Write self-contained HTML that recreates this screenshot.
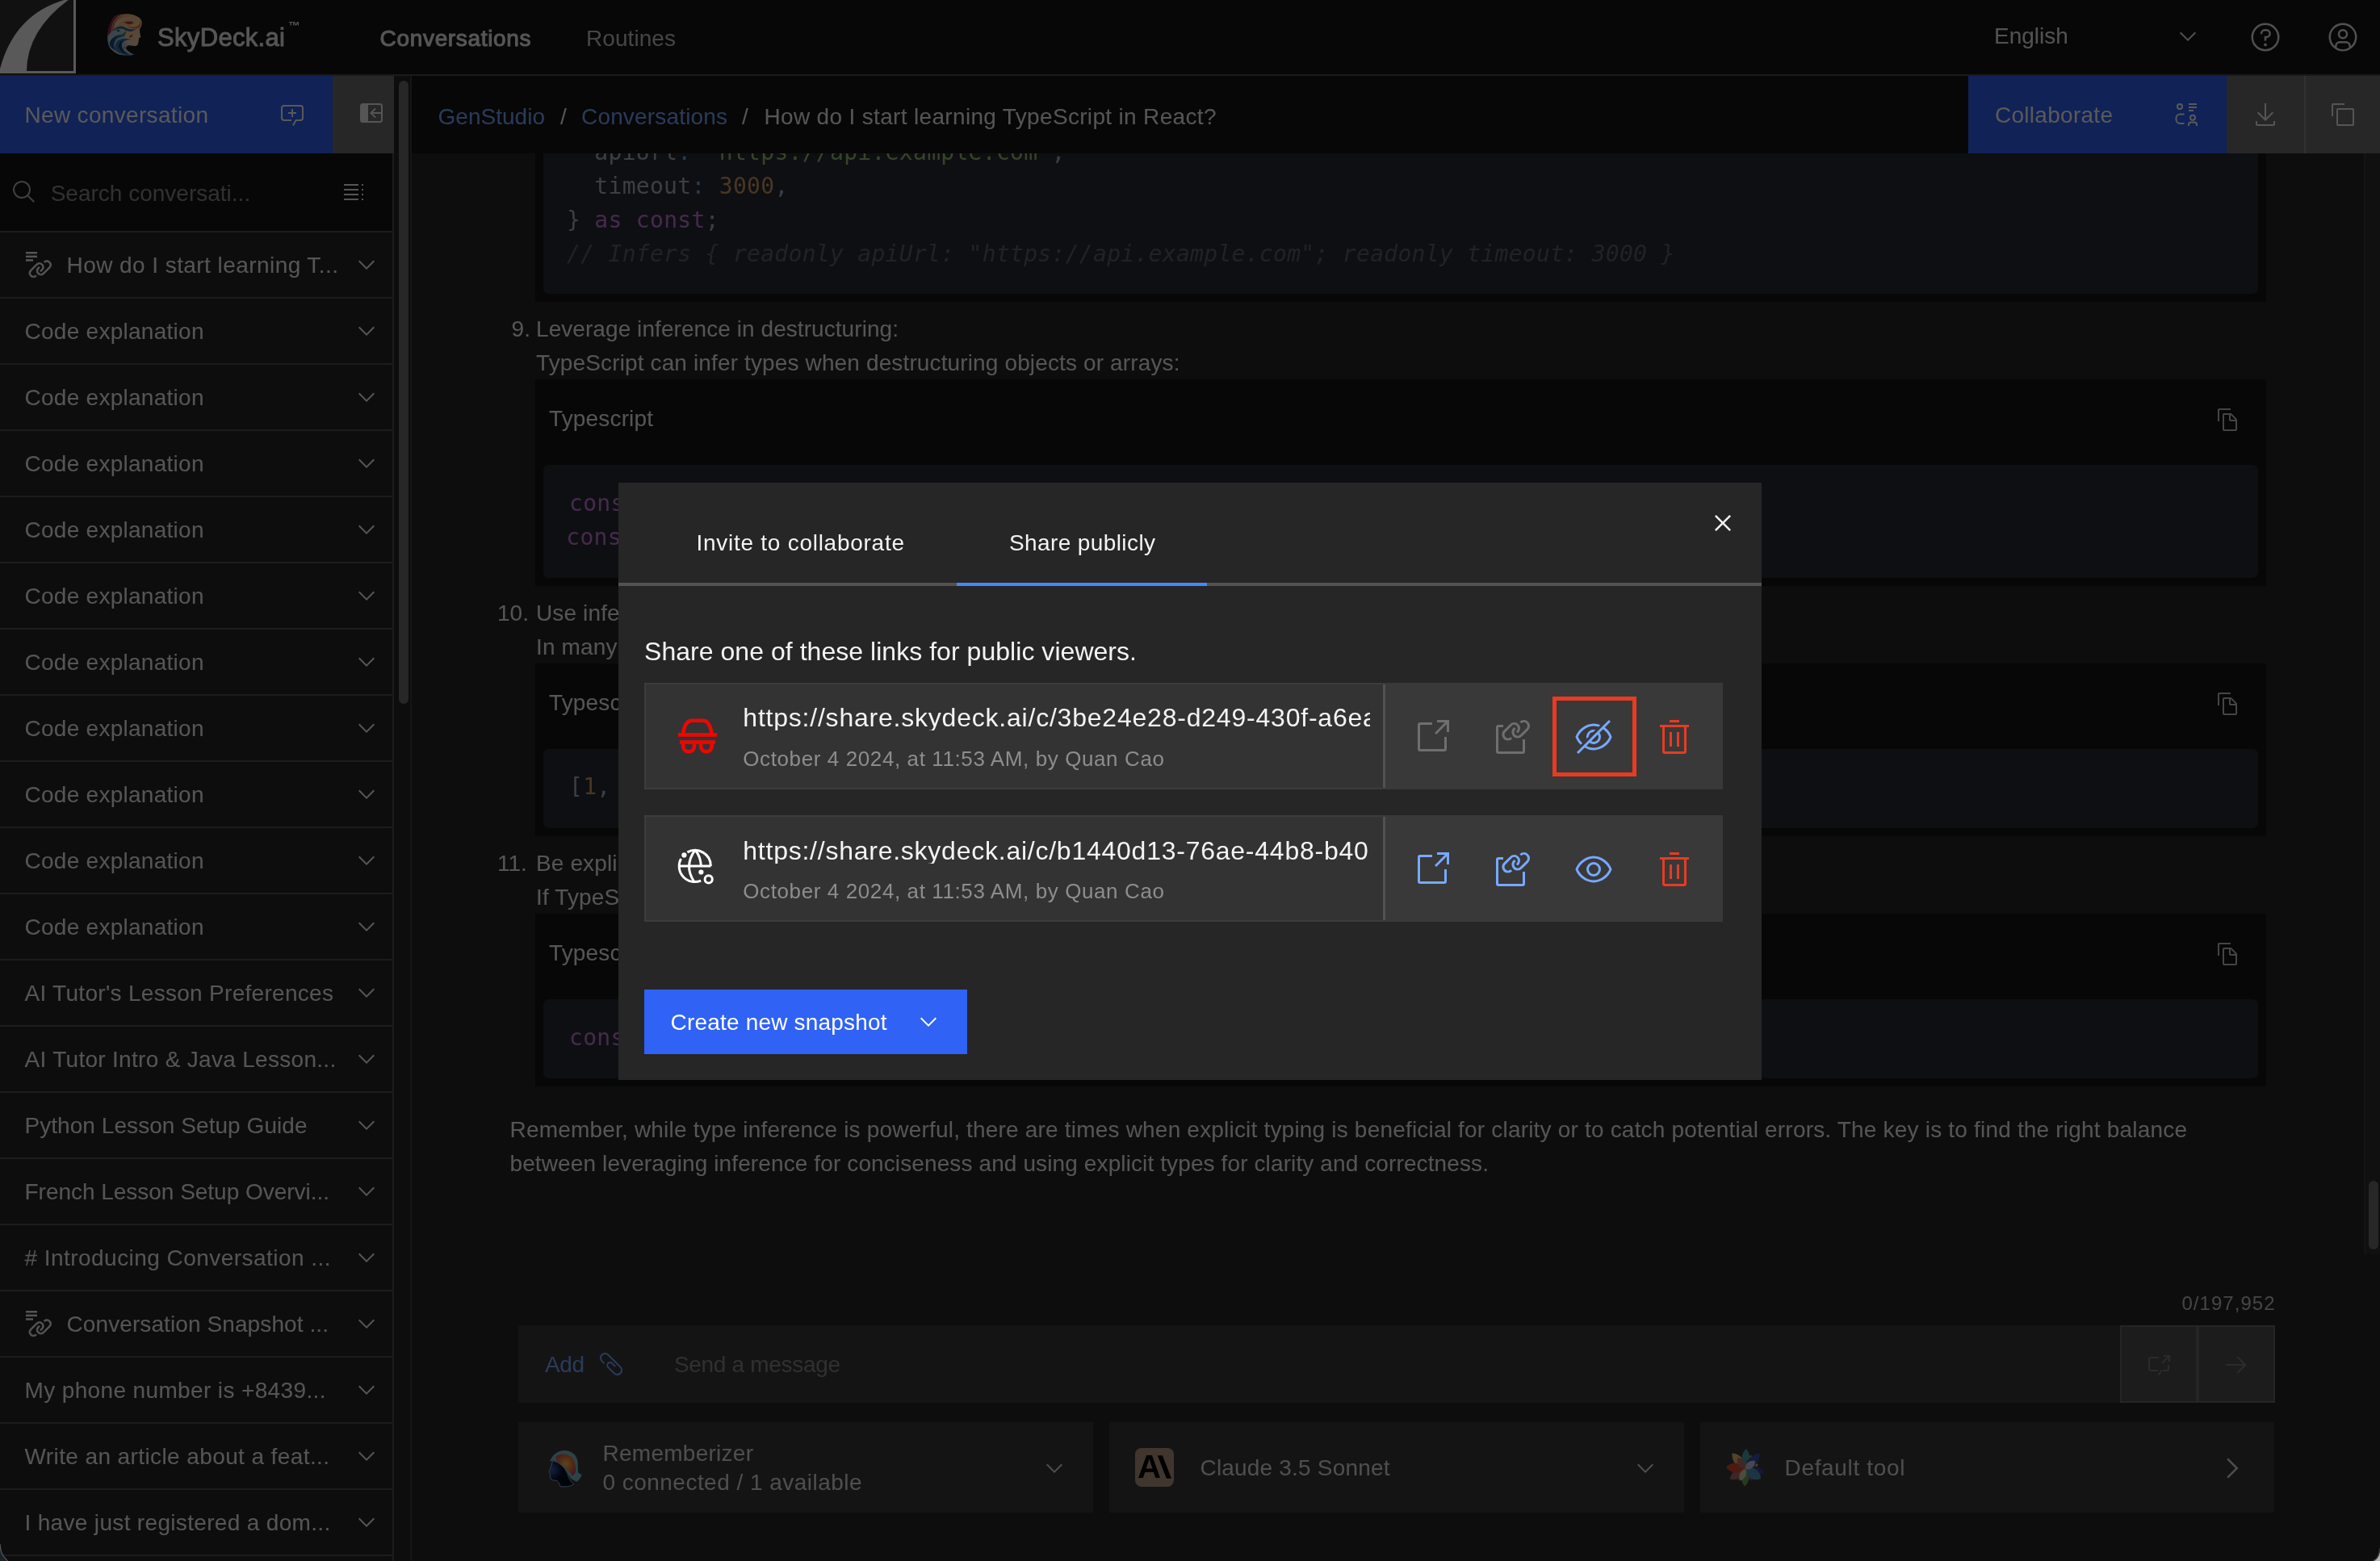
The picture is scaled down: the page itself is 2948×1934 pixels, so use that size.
<!DOCTYPE html>
<html lang="en"><head><meta charset="utf-8"><title>SkyDeck.ai - Conversations</title>
<style>
html,body{margin:0;padding:0;background:#161616;}
body{width:2948px;height:1934px;position:relative;overflow:hidden;font-family:"Liberation Sans",sans-serif;}
.t{position:absolute;white-space:pre;line-height:1;display:block;}
#app,#modal{will-change:transform;}
.a{position:absolute;display:block;}
svg{position:absolute;display:block;overflow:visible;}
#app{position:absolute;left:0;top:0;width:2948px;height:1934px;overflow:hidden;background:#161616;}
#ov{position:absolute;left:0;top:0;width:2948px;height:1934px;background:rgba(0,0,0,0.65);}
#modal{position:absolute;left:766px;top:598px;width:1416px;height:740px;background:#262626;}
#modal .t,#modal .a,#modal svg{margin-left:-766px;margin-top:-598px;}
.sep{position:absolute;left:0;width:486px;height:2px;background:#525252;}
.cl{position:absolute;white-space:pre;line-height:1;font-family:'DejaVu Sans Mono','Liberation Mono',monospace;font-size:28px;letter-spacing:0.3px;color:#abb2bf;}
.kw{color:#c678dd}.st{color:#98c379}.nu{color:#d19a66}.cm{color:#5c6370;font-style:italic}.op{color:#61afef}.fn{color:#61afef}.vr{color:#e06c75}
</style></head><body>
<div id="app">
<!-- ===== main scroll content ===== -->
<div class="a" style="left:510px;top:94px;width:2438px;height:1840px;background:#262626"></div>
<div class="a" style="left:663px;top:0px;width:2144px;height:374px;background:#161616;"></div>
<div class="a" style="left:673px;top:60px;width:2124px;height:304px;background:#282c34;border-radius:7px;"></div>
<div class="a" style="left:663px;top:470px;width:2144px;height:256px;background:#161616;"></div>
<div class="a" style="left:673px;top:576px;width:2124px;height:140px;background:#282c34;border-radius:7px;"></div>
<div class="a" style="left:663px;top:822px;width:2144px;height:214px;background:#161616;"></div>
<div class="a" style="left:673px;top:928px;width:2124px;height:98px;background:#282c34;border-radius:7px;"></div>
<div class="a" style="left:663px;top:1132px;width:2144px;height:214px;background:#161616;"></div>
<div class="a" style="left:673px;top:1238px;width:2124px;height:98px;background:#282c34;border-radius:7px;"></div>
<span class="cl" style="left:702px;top:174.8px">  apiUrl<span class="op">:</span> <span class="st">"https://api.example.com"</span>,</span>
<span class="cl" style="left:702px;top:216.8px">  timeout<span class="op">:</span> <span class="nu">3000</span>,</span>
<span class="cl" style="left:702px;top:258.8px">} <span class="kw">as</span> <span class="kw">const</span>;</span>
<span class="cl" style="left:702px;top:300.8px"><span class="cm">// Infers { readonly apiUrl: "https://api.example.com"; readonly timeout: 3000 }</span></span>
<span class="cl" style="left:705px;top:609.8px"><span class="kw">const</span> { name, age } = { name<span class="op">:</span> <span class="st">"Alice"</span>, age<span class="op">:</span> <span class="nu">30</span> };</span>
<span class="cl" style="left:701.3px;top:651.8px"><span class="kw">const</span> [first, second] = [<span class="nu">1</span>, <span class="st">"two"</span>];</span>
<span class="cl" style="left:705px;top:961.2px">[<span class="nu">1</span>, <span class="nu">2</span>, <span class="nu">3</span>].map((num) =&gt; num * <span class="nu">2</span>);</span>
<span class="cl" style="left:705px;top:1271.5px"><span class="kw">const</span> result<span class="op">:</span> number = someFunction();</span>
<div class="a" style="left:2928px;top:190px;width:20px;height:1364px;background:#2e2e2e;"></div>
<div class="a" style="left:2928px;top:190px;width:2px;height:1364px;background:#3d3d3d;"></div>
<div class="a" style="left:2934px;top:1463px;width:12px;height:85px;background:#6f6f6f;border-radius:6px;"></div>
<span class="t" style="top:394.00px;font-size:28px;color:#f4f4f4;left:633.60px;">9.</span>
<span class="t" style="top:394.00px;font-size:28px;color:#f4f4f4;left:664.00px;letter-spacing:0.065px;">Leverage inference in destructuring:</span>
<span class="t" style="top:436.30px;font-size:28px;color:#f4f4f4;left:664.00px;letter-spacing:0.134px;">TypeScript can infer types when destructuring objects or arrays:</span>
<span class="t" style="top:746.00px;font-size:28px;color:#f4f4f4;left:616.00px;">10.</span>
<span class="t" style="top:746.00px;font-size:28px;color:#f4f4f4;left:664.00px;letter-spacing:0.130px;">Use inference for callback parameters:</span>
<span class="t" style="top:788.00px;font-size:28px;color:#f4f4f4;left:664.00px;letter-spacing:0.130px;">In many cases, TypeScript can infer the types of callback parameters:</span>
<span class="t" style="top:1056.00px;font-size:28px;color:#f4f4f4;left:616.00px;">11.</span>
<span class="t" style="top:1056.00px;font-size:28px;color:#f4f4f4;left:664.00px;letter-spacing:0.130px;">Be explicit when necessary:</span>
<span class="t" style="top:1098.00px;font-size:28px;color:#f4f4f4;left:664.00px;letter-spacing:0.130px;">If TypeScript can&#x27;t infer the type you want, be explicit about it:</span>
<span class="t" style="top:504.50px;font-size:28px;color:#f4f4f4;left:680.00px;letter-spacing:0.155px;">Typescript</span>
<span class="t" style="top:856.50px;font-size:28px;color:#f4f4f4;left:680.00px;letter-spacing:0.155px;">Typescript</span>
<span class="t" style="top:1166.50px;font-size:28px;color:#f4f4f4;left:680.00px;letter-spacing:0.155px;">Typescript</span>
<span class="t" style="top:1386.00px;font-size:28px;color:#f4f4f4;left:631.50px;letter-spacing:0.192px;">Remember, while type inference is powerful, there are times when explicit typing is beneficial for clarity or to catch potential errors. The key is to find the right balance</span>
<span class="t" style="top:1428.00px;font-size:28px;color:#f4f4f4;left:631.50px;letter-spacing:0.113px;">between leveraging inference for conciseness and using explicit types for clarity and correctness.</span>
<svg style="left:2743px;top:504px" width="32" height="32" viewBox="0 0 32 32" fill="#c6c6c6"><path d="M27.4,14.7l-6.1-6.1C21,8.2,20.5,8,20,8h-8c-1.1,0-2,0.9-2,2v18c0,1.1,0.9,2,2,2h14c1.1,0,2-0.9,2-2V16.1C28,15.6,27.8,15.1,27.4,14.7z M20,10l5.9,6H20V10z M12,28V10h6v6c0,1.1,0.9,2,2,2h6l0,10H12z"/><path d="M6,18H4V4c0-1.1,0.9-2,2-2h14v2H6V18z"/></svg>
<svg style="left:2743px;top:856px" width="32" height="32" viewBox="0 0 32 32" fill="#c6c6c6"><path d="M27.4,14.7l-6.1-6.1C21,8.2,20.5,8,20,8h-8c-1.1,0-2,0.9-2,2v18c0,1.1,0.9,2,2,2h14c1.1,0,2-0.9,2-2V16.1C28,15.6,27.8,15.1,27.4,14.7z M20,10l5.9,6H20V10z M12,28V10h6v6c0,1.1,0.9,2,2,2h6l0,10H12z"/><path d="M6,18H4V4c0-1.1,0.9-2,2-2h14v2H6V18z"/></svg>
<svg style="left:2743px;top:1166px" width="32" height="32" viewBox="0 0 32 32" fill="#c6c6c6"><path d="M27.4,14.7l-6.1-6.1C21,8.2,20.5,8,20,8h-8c-1.1,0-2,0.9-2,2v18c0,1.1,0.9,2,2,2h14c1.1,0,2-0.9,2-2V16.1C28,15.6,27.8,15.1,27.4,14.7z M20,10l5.9,6H20V10z M12,28V10h6v6c0,1.1,0.9,2,2,2h6l0,10H12z"/><path d="M6,18H4V4c0-1.1,0.9-2,2-2h14v2H6V18z"/></svg>
<!-- ===== breadcrumb bar ===== -->
<div class="a" style="left:510px;top:94px;width:2438px;height:96px;background:#161616"></div>
<div class="a" style="left:2438px;top:94px;width:320px;height:96px;background:#2f62f5"></div>
<div class="a" style="left:2758px;top:94px;width:96px;height:96px;background:#6f6f6f"></div>
<div class="a" style="left:2854px;top:94px;width:2px;height:96px;background:#8d8d8d"></div>
<div class="a" style="left:2856px;top:94px;width:92px;height:96px;background:#6f6f6f"></div>
<span class="t" style="top:131.00px;font-size:28px;color:#78a9ff;left:542.50px;letter-spacing:0.021px;">GenStudio</span>
<span class="t" style="top:131.00px;font-size:28px;color:#f4f4f4;left:694.00px;">/</span>
<span class="t" style="top:131.00px;font-size:28px;color:#78a9ff;left:720.00px;letter-spacing:0.168px;">Conversations</span>
<span class="t" style="top:131.00px;font-size:28px;color:#f4f4f4;left:919.00px;">/</span>
<span class="t" style="top:131.00px;font-size:28px;color:#f4f4f4;left:946.50px;letter-spacing:0.331px;">How do I start learning TypeScript in React?</span>
<span class="t" style="top:129.00px;font-size:28px;color:#ffffff;left:2471.00px;letter-spacing:0.280px;">Collaborate</span>
<svg style="left:2692px;top:126px" width="32" height="32" viewBox="0 0 32 32"><g fill="none" stroke="#ffffff" stroke-width="2"><circle cx="8" cy="6" r="3"/><path d="M13.5 15.5H8.5A5 5 0 0 0 3.5 20.5V22A5 5 0 0 0 8.5 27H13.5"/><path d="M19 3H29M19 7H29M19 11H25"/><circle cx="24" cy="19.75" r="3"/><path d="M19 30V28.5A3 3 0 0 1 22 25.5H26A3 3 0 0 1 29 28.5V30"/></g></svg>
<svg style="left:2790px;top:126px" width="32" height="32" viewBox="0 0 32 32" fill="#f4f4f4"><path d="M26 24v4H6v-4H4v4a2 2 0 002 2h20a2 2 0 002-2v-4zM26 14l-1.41-1.41L17 20.17V2h-2v18.17l-7.59-7.58L6 14l10 10 10-10z"/></svg>
<svg style="left:2886px;top:126px" width="32" height="32" viewBox="0 0 32 32" fill="#f4f4f4"><path d="M28,10V28H10V10H28m0-2H10a2,2,0,0,0-2,2V28a2,2,0,0,0,2,2H28a2,2,0,0,0,2-2V10a2,2,0,0,0-2-2Z"/><path d="M4,18H2V4A2,2,0,0,1,4,2H18V4H4Z"/></svg>
<!-- ===== bottom input area ===== -->
<div class="a" style="left:510px;top:1554px;width:2438px;height:380px;background:#262626;"></div>
<div class="a" style="left:642px;top:1642px;width:2176px;height:96px;background:#393939;"></div>
<div class="a" style="left:2626px;top:1642px;width:96px;height:96px;background:#505050;box-sizing:border-box;border:2px solid #6a6a6a;"></div>
<div class="a" style="left:2722px;top:1642px;width:96px;height:96px;background:#505050;box-sizing:border-box;border:2px solid #6a6a6a;"></div>
<div class="a" style="left:642px;top:1762px;width:712px;height:112px;background:#393939;"></div>
<div class="a" style="left:1374px;top:1762px;width:712px;height:112px;background:#393939;"></div>
<div class="a" style="left:2106px;top:1762px;width:711px;height:112px;background:#393939;"></div>
<span class="t" style="top:1603.20px;font-size:24px;color:#c6c6c6;left:2702.50px;letter-spacing:1.027px;">0/197,952</span>
<span class="t" style="top:1677.00px;font-size:28px;color:#78a9ff;left:675.00px;letter-spacing:-0.414px;">Add</span>
<span class="t" style="top:1677.00px;font-size:28px;color:#8a8a8a;left:835.00px;letter-spacing:-0.319px;">Send a message</span>
<span class="t" style="top:1787.00px;font-size:28px;color:#e0e0e0;left:746.50px;letter-spacing:0.263px;">Rememberizer</span>
<span class="t" style="top:1823.00px;font-size:28px;color:#e0e0e0;left:746.50px;letter-spacing:0.467px;">0 connected / 1 available</span>
<span class="t" style="top:1804.50px;font-size:28px;color:#e0e0e0;left:1486.50px;letter-spacing:0.189px;">Claude 3.5 Sonnet</span>
<span class="t" style="top:1804.50px;font-size:28px;color:#e0e0e0;left:2210.50px;letter-spacing:0.669px;">Default tool</span>
<svg style="left:741px;top:1674px" width="32" height="32" viewBox="0 0 32 32" fill="#78a9ff"><path d="M28.1,18.9L13.1,3.9c-2.5-2.6-6.6-2.6-9.2-0.1S1.3,10.4,3.9,13c0,0,0.1,0.1,0.1,0.1L6.8,16l1.4-1.4l-2.9-2.9C3.6,10,3.6,7.1,5.3,5.4s4.6-1.8,6.3-0.1c0,0,0,0,0.1,0.1l14.9,14.9c1.8,1.7,1.8,4.6,0.1,6.3c-1.7,1.8-4.6,1.8-6.3,0.1c0,0,0,0-0.1-0.1l-7.4-7.4c-1-1-0.9-2.6,0-3.5c1-0.9,2.5-0.9,3.5,0l4.1,4.1l1.4-1.4c0,0-4.2-4.2-4.2-4.2c-1.8-1.7-4.6-1.6-6.3,0.2c-1.6,1.7-1.6,4.4,0,6.2l7.5,7.5c2.5,2.6,6.6,2.6,9.2,0.1S30.7,21.6,28.1,18.9L28.1,18.9z"/></svg>
<svg style="left:1290px;top:1803px" width="32" height="32" viewBox="0 0 32 32" fill="#e0e0e0"><path d="M16 22L6 12 7.4 10.6 16 19.2 24.6 10.6 26 12z"/></svg>
<svg style="left:2022px;top:1803px" width="32" height="32" viewBox="0 0 32 32" fill="#e0e0e0"><path d="M16 22L6 12 7.4 10.6 16 19.2 24.6 10.6 26 12z"/></svg>
<svg style="left:2744.75px;top:1798.5px" width="40" height="40" viewBox="0 0 32 32" fill="#e0e0e0"><path d="M22 16L12 26 10.6 24.6 19.2 16 10.6 7.4 12 6z"/></svg>
<svg style="left:2752.5px;top:1674px" width="34" height="34" viewBox="0 0 32 32" fill="#7c7c7c"><path d="M18 6L16.57 7.393 24.15 15 4 15 4 17 24.15 17 16.57 24.573 18 26 28 16 18 6z"/></svg>
<svg style="left:2660px;top:1678.5px" width="30" height="28" viewBox="0 0 30 28"><g fill="none" stroke="#7c7c7c" stroke-width="2"><path d="M14 3H4A2 2 0 0 0 2 5V17A2 2 0 0 0 4 19H13M19 19H24A2 2 0 0 0 26 17V12M17 19L13.5 25"/><path d="M18 10L27 1M20 1H27V8"/></g></svg>
<svg style="left:679.7px;top:1796.7px" width="42" height="46" viewBox="0 0 42 46"><defs><filter id="bl1" x="-10%" y="-10%" width="120%" height="120%"><feGaussianBlur stdDeviation="0.7"/></filter><radialGradient id="rg2" cx="12%" cy="35%" r="45%"><stop offset="0" stop-color="#3a5fb0"/><stop offset="1" stop-color="#050a20"/></radialGradient><radialGradient id="rg1" cx="50%" cy="45%" r="60%"><stop offset="0" stop-color="#ffc860"/><stop offset="0.55" stop-color="#f07a30"/><stop offset="1" stop-color="#b04a70"/></radialGradient></defs><g filter="url(#bl1)"><path d="M1 14.1C3 7 10 0.3 18.7 0C28 0 35 6 35.6 14.1C36 19 35.5 23 36.1 26.9C37.5 28.8 39 29.5 40.7 29.5C40 33 38 36.5 34.6 38.7C31 37.5 28 36 26.4 33.6C24 30 22 26 19.2 22.3C16 18.5 12.5 15.5 9 14.1C7.5 13.3 6 12.8 4.9 12.6C3.5 13.2 2 13.8 1 14.1Z" fill="#7fc0d0"/><path d="M4.9 12.6C4 15 3.2 17 2.8 19.2C2 21.5 1 24 0 26.4C0.5 27.5 1.2 28.5 1.8 29.5L1.3 32C1.5 33.5 2 35 2.8 36.1C5 37 7 37.3 9 37.2C10.5 37.8 11.5 38.7 12 39.7C13 41.3 13.7 43 14.1 44.8H22.3C25.5 44.5 28.5 43.3 30.5 41.8C28 39.5 26 37 24.9 34.6C24 32.8 23.5 31 23.3 29.5C22 27 20.5 24.5 19.2 22.3C16 18.5 12.5 15.5 9 14.1Z" fill="url(#rg2)" stroke="#8fb0dc" stroke-width="1"/><path d="M8.5 7.9C12 5 17 4 21.3 4.9C27 6.5 30.5 10 31.5 14.1C33 18 33.6 23 33 26.9C32 29 30.5 30.7 29 31.5C26 27.5 23 23.5 19.2 20.2C16.5 18 13.5 16.2 11 15.1C9.5 12.8 8.6 10.3 8.5 7.9Z" fill="url(#rg1)"/></g></svg>
<div class="a" style="left:1406px;top:1794px;width:48px;height:48px;background:#b89b84;border-radius:8px;"></div>
<span class="t" style="left:1409px;top:1797.6px;font-size:40.3px;font-weight:700;color:#000;">A</span>
<span class="t" style="left:1433.5px;top:1801px;font-size:35.6px;font-weight:700;color:#000;-webkit-text-stroke:1.9px #000;transform:skewX(11.5deg);transform-origin:0 0;">\</span>
<svg style="left:2138px;top:1795.5px" width="48" height="48" viewBox="0 0 48 48"><path d="M0 0C5.5 -4.8 5.0 -14.2 0 -19.0C-5.0 -14.2 -5.5 -4.8 0 0Z" fill="#e09a30" transform="translate(24 24) rotate(25)"/><path d="M0 0C5.5 -4.2 5.0 -12.8 0 -17.0C-5.0 -12.8 -5.5 -4.2 0 0Z" fill="#d8b040" transform="translate(24 24) rotate(70)"/><path d="M0 0C5.5 -4.2 5.0 -12.8 0 -17.0C-5.0 -12.8 -5.5 -4.2 0 0Z" fill="#8a3a8a" transform="translate(24 24) rotate(150)"/><path d="M0 0C5.5 -5.0 5.0 -15.0 0 -20.0C-5.0 -15.0 -5.5 -5.0 0 0Z" fill="#a84a5a" transform="translate(24 24) rotate(110)"/><path d="M0 0C5.5 -4.2 5.0 -12.8 0 -17.0C-5.0 -12.8 -5.5 -4.2 0 0Z" fill="#4a7a3a" transform="translate(24 24) rotate(215)"/><path d="M0 0C7.7 -6.4 7.0 -19.1 0 -25.5C-7.0 -19.1 -7.7 -6.4 0 0Z" fill="#e8c468" transform="translate(24 24) rotate(320)"/><path d="M0 0C7.2 -6.2 6.5 -18.8 0 -25.0C-6.5 -18.8 -7.2 -6.2 0 0Z" fill="#4aa3aa" transform="translate(24 24) rotate(2)"/><path d="M0 0C7.7 -6.5 7.0 -19.5 0 -26.0C-7.0 -19.5 -7.7 -6.5 0 0Z" fill="#3555b5" transform="translate(24 24) rotate(43)"/><path d="M0 0C7.7 -6.0 7.0 -18.0 0 -24.0C-7.0 -18.0 -7.7 -6.0 0 0Z" fill="#4040a0" transform="translate(24 24) rotate(100)"/><path d="M0 0C7.7 -5.8 7.0 -17.2 0 -23.0C-7.0 -17.2 -7.7 -5.8 0 0Z" fill="#b06a78" transform="translate(24 24) rotate(237)"/><path d="M0 0C8.2 -6.0 7.5 -18.0 0 -24.0C-7.5 -18.0 -8.2 -6.0 0 0Z" fill="#e04c30" transform="translate(24 24) rotate(276)"/><path d="M0 0C6.6 -5.4 6.0 -16.1 0 -21.5C-6.0 -16.1 -6.6 -5.4 0 0Z" fill="#6fa555" transform="translate(24 24) rotate(182)"/><path d="M0 0C8.8 -5.6 8.0 -16.9 0 -22.5C-8.0 -16.9 -8.8 -5.6 0 0Z" fill="#5598be" transform="translate(24 24) rotate(122)"/><path d="M0 0C6.1 -4.2 5.5 -12.8 0 -17.0C-5.5 -12.8 -6.1 -4.2 0 0Z" fill="#c07070" transform="translate(24 24) rotate(325)"/><path d="M0 0C6.1 -3.9 5.5 -11.6 0 -15.5C-5.5 -11.6 -6.1 -3.9 0 0Z" fill="#ccccde" transform="translate(24 24) rotate(50)"/><path d="M0 0C5.5 -4.0 5.0 -12.0 0 -16.0C-5.0 -12.0 -5.5 -4.0 0 0Z" fill="#ddd3b2" transform="translate(24 24) rotate(205)"/></svg>
<!-- ===== sidebar ===== -->
<div class="a" style="left:0;top:94px;width:486px;height:1840px;background:#262626"></div>
<div class="a" style="left:0;top:190px;width:486px;height:96px;background:#161616"></div>
<div class="a" style="left:486px;top:94px;width:2px;height:1840px;background:#525252"></div>
<div class="a" style="left:488px;top:94px;width:20px;height:1840px;background:#262626"></div>
<div class="a" style="left:508px;top:94px;width:2px;height:1840px;background:#3d3d3d"></div>
<div class="a" style="left:494px;top:100px;width:12px;height:772px;border-radius:6px;background:#6f6f6f"></div>
<div class="a" style="left:0;top:94px;width:412px;height:96px;background:#2f62f5"></div>
<div class="a" style="left:412px;top:94px;width:76px;height:96px;background:#6f6f6f"></div>
<div class="sep" style="top:286px"></div>
<div class="sep" style="top:368px"></div>
<div class="sep" style="top:450px"></div>
<div class="sep" style="top:532px"></div>
<div class="sep" style="top:614px"></div>
<div class="sep" style="top:696px"></div>
<div class="sep" style="top:778px"></div>
<div class="sep" style="top:860px"></div>
<div class="sep" style="top:942px"></div>
<div class="sep" style="top:1024px"></div>
<div class="sep" style="top:1106px"></div>
<div class="sep" style="top:1188px"></div>
<div class="sep" style="top:1270px"></div>
<div class="sep" style="top:1352px"></div>
<div class="sep" style="top:1434px"></div>
<div class="sep" style="top:1516px"></div>
<div class="sep" style="top:1598px"></div>
<div class="sep" style="top:1680px"></div>
<div class="sep" style="top:1762px"></div>
<div class="sep" style="top:1844px"></div>
<div class="sep" style="top:1926px"></div>
<span class="t" style="top:129.00px;font-size:28px;color:#ffffff;left:30.50px;letter-spacing:0.329px;">New conversation</span>
<span class="t" style="top:226.00px;font-size:28px;color:#8d8d8d;left:62.70px;letter-spacing:0.002px;">Search conversati...</span>
<span class="t" style="top:315.00px;font-size:28px;color:#f4f4f4;left:82.50px;letter-spacing:0.435px;">How do I start learning T...</span>
<span class="t" style="top:397.00px;font-size:28px;color:#f4f4f4;left:30.50px;letter-spacing:0.270px;">Code explanation</span>
<span class="t" style="top:479.00px;font-size:28px;color:#f4f4f4;left:30.50px;letter-spacing:0.270px;">Code explanation</span>
<span class="t" style="top:561.00px;font-size:28px;color:#f4f4f4;left:30.50px;letter-spacing:0.270px;">Code explanation</span>
<span class="t" style="top:643.00px;font-size:28px;color:#f4f4f4;left:30.50px;letter-spacing:0.270px;">Code explanation</span>
<span class="t" style="top:725.00px;font-size:28px;color:#f4f4f4;left:30.50px;letter-spacing:0.270px;">Code explanation</span>
<span class="t" style="top:807.00px;font-size:28px;color:#f4f4f4;left:30.50px;letter-spacing:0.270px;">Code explanation</span>
<span class="t" style="top:889.00px;font-size:28px;color:#f4f4f4;left:30.50px;letter-spacing:0.270px;">Code explanation</span>
<span class="t" style="top:971.00px;font-size:28px;color:#f4f4f4;left:30.50px;letter-spacing:0.270px;">Code explanation</span>
<span class="t" style="top:1053.00px;font-size:28px;color:#f4f4f4;left:30.50px;letter-spacing:0.270px;">Code explanation</span>
<span class="t" style="top:1135.00px;font-size:28px;color:#f4f4f4;left:30.50px;letter-spacing:0.270px;">Code explanation</span>
<span class="t" style="top:1217.00px;font-size:28px;color:#f4f4f4;left:30.50px;letter-spacing:0.296px;">AI Tutor&#x27;s Lesson Preferences</span>
<span class="t" style="top:1299.00px;font-size:28px;color:#f4f4f4;left:30.50px;letter-spacing:0.302px;">AI Tutor Intro &amp; Java Lesson...</span>
<span class="t" style="top:1381.00px;font-size:28px;color:#f4f4f4;left:30.50px;letter-spacing:0.055px;">Python Lesson Setup Guide</span>
<span class="t" style="top:1463.00px;font-size:28px;color:#f4f4f4;left:30.50px;letter-spacing:-0.025px;">French Lesson Setup Overvi...</span>
<span class="t" style="top:1545.00px;font-size:28px;color:#f4f4f4;left:30.50px;letter-spacing:0.456px;"># Introducing Conversation ...</span>
<span class="t" style="top:1627.00px;font-size:28px;color:#f4f4f4;left:82.50px;letter-spacing:0.096px;">Conversation Snapshot ...</span>
<span class="t" style="top:1709.00px;font-size:28px;color:#f4f4f4;left:30.50px;letter-spacing:0.367px;">My phone number is +8439...</span>
<span class="t" style="top:1791.00px;font-size:28px;color:#f4f4f4;left:30.50px;letter-spacing:0.396px;">Write an article about a feat...</span>
<span class="t" style="top:1873.00px;font-size:28px;color:#f4f4f4;left:30.50px;letter-spacing:0.328px;">I have just registered a dom...</span>
<svg style="left:346px;top:126px" width="32" height="32" viewBox="0 0 32 32" fill="#ffffff"><path d="M17.74,30,16,29l4-7h6a2,2,0,0,0,2-2V8a2,2,0,0,0-2-2H6A2,2,0,0,0,4,8V20a2,2,0,0,0,2,2h9v2H6a4,4,0,0,1-4-4V8A4,4,0,0,1,6,4H26a4,4,0,0,1,4,4V20a4,4,0,0,1-4,4H21.16Z"/><path d="M17 9L15 9 15 13 11 13 11 15 15 15 15 19 17 19 17 15 21 15 21 13 17 13 17 9z"/></svg>
<svg style="left:446px;top:128px" width="28" height="24" viewBox="0 0 28 24"><rect x="1" y="1" width="26" height="22" rx="2.5" fill="none" stroke="#f4f4f4" stroke-width="2"/><path d="M1 3.5A2.5 2.5 0 0 1 3.5 1H10V23H3.5A2.5 2.5 0 0 1 1 20.5Z" fill="#f4f4f4"/><path d="M26 12H14M19 6.5L13.5 12L19 17.5" fill="none" stroke="#f4f4f4" stroke-width="2"/></svg>
<svg style="left:14px;top:222px" width="32" height="32" viewBox="0 0 32 32" fill="#b4b4b4"><path d="M29,27.5859l-7.5521-7.5521a11.0177,11.0177,0,1,0-1.4141,1.4141L27.5859,29ZM4,13a9,9,0,1,1,9,9A9.01,9.01,0,0,1,4,13Z"/></svg>
<svg style="left:426px;top:228px" width="24" height="20" viewBox="0 0 24 20"><rect x="0" y="0" width="18" height="2" fill="#f4f4f4"/><rect x="22" y="0" width="2" height="2" fill="#f4f4f4"/><rect x="0" y="6" width="18" height="2" fill="#f4f4f4"/><rect x="22" y="6" width="2" height="2" fill="#f4f4f4"/><rect x="0" y="12" width="18" height="2" fill="#f4f4f4"/><rect x="22" y="12" width="2" height="2" fill="#f4f4f4"/><rect x="0" y="18" width="18" height="2" fill="#f4f4f4"/><rect x="22" y="18" width="2" height="2" fill="#f4f4f4"/></svg>
<svg style="left:32px;top:312px" width="14" height="12" viewBox="0 0 14 12"><rect x="0" y="0" width="14" height="2.5" fill="#f4f4f4"/><rect x="0" y="4.6" width="14" height="2.5" fill="#f4f4f4"/><rect x="0" y="9.2" width="9" height="2.5" fill="#f4f4f4"/></svg><svg style="left:35px;top:318px" width="29.5" height="29.5" viewBox="0 0 32 32" fill="#f4f4f4" stroke="#f4f4f4" stroke-width="0.8"><path d="M29.25,6.76a6,6,0,0,0-8.5,0l1.42,1.42a4,4,0,1,1,5.67,5.67l-8,8a4,4,0,1,1-5.67-5.66l1.41-1.42-1.41-1.42-1.42,1.42a6,6,0,0,0,0,8.5A6,6,0,0,0,17,25a6,6,0,0,0,4.27-1.76l8-8A6,6,0,0,0,29.25,6.76Z"/><path d="M4.19,24.82a4,4,0,0,1,0-5.67l8-8a4,4,0,0,1,5.67,0A3.94,3.94,0,0,1,19,14a4,4,0,0,1-1.17,2.85L15.71,19l1.42,1.42,2.12-2.12a6,6,0,0,0-8.51-8.51l-8,8a6,6,0,0,0,0,8.51A6,6,0,0,0,7,28a6.07,6.07,0,0,0,4.28-1.76L9.86,24.82A4,4,0,0,1,4.19,24.82Z"/></svg>
<svg style="left:32px;top:1624px" width="14" height="12" viewBox="0 0 14 12"><rect x="0" y="0" width="14" height="2.5" fill="#f4f4f4"/><rect x="0" y="4.6" width="14" height="2.5" fill="#f4f4f4"/><rect x="0" y="9.2" width="9" height="2.5" fill="#f4f4f4"/></svg><svg style="left:35px;top:1630px" width="29.5" height="29.5" viewBox="0 0 32 32" fill="#f4f4f4" stroke="#f4f4f4" stroke-width="0.8"><path d="M29.25,6.76a6,6,0,0,0-8.5,0l1.42,1.42a4,4,0,1,1,5.67,5.67l-8,8a4,4,0,1,1-5.67-5.66l1.41-1.42-1.41-1.42-1.42,1.42a6,6,0,0,0,0,8.5A6,6,0,0,0,17,25a6,6,0,0,0,4.27-1.76l8-8A6,6,0,0,0,29.25,6.76Z"/><path d="M4.19,24.82a4,4,0,0,1,0-5.67l8-8a4,4,0,0,1,5.67,0A3.94,3.94,0,0,1,19,14a4,4,0,0,1-1.17,2.85L15.71,19l1.42,1.42,2.12-2.12a6,6,0,0,0-8.51-8.51l-8,8a6,6,0,0,0,0,8.51A6,6,0,0,0,7,28a6.07,6.07,0,0,0,4.28-1.76L9.86,24.82A4,4,0,0,1,4.19,24.82Z"/></svg>
<svg style="left:438px;top:312px" width="32" height="32" viewBox="0 0 32 32" fill="#f4f4f4"><path d="M16 22L6 12 7.4 10.6 16 19.2 24.6 10.6 26 12z"/></svg>
<svg style="left:438px;top:394px" width="32" height="32" viewBox="0 0 32 32" fill="#f4f4f4"><path d="M16 22L6 12 7.4 10.6 16 19.2 24.6 10.6 26 12z"/></svg>
<svg style="left:438px;top:476px" width="32" height="32" viewBox="0 0 32 32" fill="#f4f4f4"><path d="M16 22L6 12 7.4 10.6 16 19.2 24.6 10.6 26 12z"/></svg>
<svg style="left:438px;top:558px" width="32" height="32" viewBox="0 0 32 32" fill="#f4f4f4"><path d="M16 22L6 12 7.4 10.6 16 19.2 24.6 10.6 26 12z"/></svg>
<svg style="left:438px;top:640px" width="32" height="32" viewBox="0 0 32 32" fill="#f4f4f4"><path d="M16 22L6 12 7.4 10.6 16 19.2 24.6 10.6 26 12z"/></svg>
<svg style="left:438px;top:722px" width="32" height="32" viewBox="0 0 32 32" fill="#f4f4f4"><path d="M16 22L6 12 7.4 10.6 16 19.2 24.6 10.6 26 12z"/></svg>
<svg style="left:438px;top:804px" width="32" height="32" viewBox="0 0 32 32" fill="#f4f4f4"><path d="M16 22L6 12 7.4 10.6 16 19.2 24.6 10.6 26 12z"/></svg>
<svg style="left:438px;top:886px" width="32" height="32" viewBox="0 0 32 32" fill="#f4f4f4"><path d="M16 22L6 12 7.4 10.6 16 19.2 24.6 10.6 26 12z"/></svg>
<svg style="left:438px;top:968px" width="32" height="32" viewBox="0 0 32 32" fill="#f4f4f4"><path d="M16 22L6 12 7.4 10.6 16 19.2 24.6 10.6 26 12z"/></svg>
<svg style="left:438px;top:1050px" width="32" height="32" viewBox="0 0 32 32" fill="#f4f4f4"><path d="M16 22L6 12 7.4 10.6 16 19.2 24.6 10.6 26 12z"/></svg>
<svg style="left:438px;top:1132px" width="32" height="32" viewBox="0 0 32 32" fill="#f4f4f4"><path d="M16 22L6 12 7.4 10.6 16 19.2 24.6 10.6 26 12z"/></svg>
<svg style="left:438px;top:1214px" width="32" height="32" viewBox="0 0 32 32" fill="#f4f4f4"><path d="M16 22L6 12 7.4 10.6 16 19.2 24.6 10.6 26 12z"/></svg>
<svg style="left:438px;top:1296px" width="32" height="32" viewBox="0 0 32 32" fill="#f4f4f4"><path d="M16 22L6 12 7.4 10.6 16 19.2 24.6 10.6 26 12z"/></svg>
<svg style="left:438px;top:1378px" width="32" height="32" viewBox="0 0 32 32" fill="#f4f4f4"><path d="M16 22L6 12 7.4 10.6 16 19.2 24.6 10.6 26 12z"/></svg>
<svg style="left:438px;top:1460px" width="32" height="32" viewBox="0 0 32 32" fill="#f4f4f4"><path d="M16 22L6 12 7.4 10.6 16 19.2 24.6 10.6 26 12z"/></svg>
<svg style="left:438px;top:1542px" width="32" height="32" viewBox="0 0 32 32" fill="#f4f4f4"><path d="M16 22L6 12 7.4 10.6 16 19.2 24.6 10.6 26 12z"/></svg>
<svg style="left:438px;top:1624px" width="32" height="32" viewBox="0 0 32 32" fill="#f4f4f4"><path d="M16 22L6 12 7.4 10.6 16 19.2 24.6 10.6 26 12z"/></svg>
<svg style="left:438px;top:1706px" width="32" height="32" viewBox="0 0 32 32" fill="#f4f4f4"><path d="M16 22L6 12 7.4 10.6 16 19.2 24.6 10.6 26 12z"/></svg>
<svg style="left:438px;top:1788px" width="32" height="32" viewBox="0 0 32 32" fill="#f4f4f4"><path d="M16 22L6 12 7.4 10.6 16 19.2 24.6 10.6 26 12z"/></svg>
<svg style="left:438px;top:1870px" width="32" height="32" viewBox="0 0 32 32" fill="#f4f4f4"><path d="M16 22L6 12 7.4 10.6 16 19.2 24.6 10.6 26 12z"/></svg>
<svg style="left:438px;top:1952px" width="32" height="32" viewBox="0 0 32 32" fill="#f4f4f4"><path d="M16 22L6 12 7.4 10.6 16 19.2 24.6 10.6 26 12z"/></svg>
<!-- ===== header ===== -->
<div class="a" style="left:0;top:0;width:2948px;height:92px;background:#161616"></div>
<div class="a" style="left:0;top:92px;width:2948px;height:2px;background:#4c4c4c"></div>
<span class="t" style="top:31.00px;font-size:31px;color:#f4f4f4;left:195.00px;letter-spacing:0.328px;-webkit-text-stroke:0.9px #f4f4f4;">SkyDeck.ai</span>
<span class="t" style="top:25.00px;font-size:14.5px;color:#f4f4f4;left:357.00px;font-weight:700;">™</span>
<span class="t" style="top:33.70px;font-size:28px;color:#f4f4f4;left:470.60px;letter-spacing:0.668px;-webkit-text-stroke:1.0px #f4f4f4;">Conversations</span>
<span class="t" style="top:33.70px;font-size:28px;color:#c6c6c6;left:726.00px;letter-spacing:0.069px;">Routines</span>
<span class="t" style="top:31.40px;font-size:28px;color:#ececec;left:2470.00px;letter-spacing:-0.016px;">English</span>
<div class="a" style="left:0px;top:0px;width:94px;height:91px;background:#333333;box-sizing:border-box;border-right:3px solid #fff;border-bottom:3px solid #fff;"></div>
<svg style="left:0px;top:0px" width="91" height="88" viewBox="0 0 91 88"><path d="M0 85.2Q18 18 79.4 0L84.6 0Q33.4 38 33 88L0 88Z" fill="#ffffff"/></svg>
<svg style="left:132.6px;top:16.9px" width="43" height="51" viewBox="0 0 43 51"><defs><linearGradient id="lg1" x1="0" y1="0" x2="1" y2="1"><stop offset="0" stop-color="#ea8a58"/><stop offset=".4" stop-color="#f7c692"/><stop offset="1" stop-color="#f4d8b4"/></linearGradient></defs><path d="M0.4 28C0.5 20 3 10 9 3.5C13 0.5 25 -0.5 31 1C37 2.5 42 6 42.7 10C43 13 42.5 16 40 19C40 22 40.5 26 41.4 29L39.2 30.3L38.8 33C38.5 36 38 38 37 39C36 40 34 40 33.5 40C30 40 27 39 25.3 39.4C23 40.5 22.5 43 23.5 44C24.5 46 29 49 33 50.8C28 51.5 22 51.5 18 51C14 50.5 11 49 9 47.5C5 45 2.5 42 1.7 39C0.8 36 0.3 32 0.4 28Z" fill="url(#lg1)"/><path d="M0.4 28C0.5 18 4 8 10 3C13 1 16 0.2 19 0C14 2 9 6 6.5 12C4.5 17 4 23 4.5 27Z" fill="#8e2a4a"/><path d="M4.5 27C4 22 5 16 7.5 11C10 6.5 14 3 19 1.2C15 4 11 8 9 13C7.5 17 7 22 7.5 25.5Z" fill="#c9706a"/><path d="M10 12C14 6.5 22 3.5 31 5C25 5.5 18 8 13.5 13.5C12 15.3 11 17 10.5 18.5C9.8 16.5 9.6 14 10 12Z" fill="#fbe6c8" opacity=".55"/><path d="M20.5 10.5C24 9 30 9 33 10.5C31 13 28 13.5 25.5 13C23.5 12.5 22 11.5 20.5 10.5Z" fill="#d03a2a"/><path d="M23 14C28 17 35 18 39 14C41 12 41.5 9 40 6.5C42 9 42.5 13 40.5 16.5C36 20 29 19 23 14Z" fill="#e07a3a"/><path d="M0.4 28C2 25 4 23 6.5 21.5C11 19 15 19.5 18 21C21 22.5 22 25 22.5 28C23 31 30 33 32 34C29 36 26 38 25.3 39.4C23 40.5 22.5 43 23.5 44C24.5 46 29 49 33 50.8C28 51.5 22 51.5 18 51C11 50 5 46 1.7 39C0.8 36 0.3 32 0.4 28Z" fill="#a9c7d8"/><path d="M22.5 28C23 31 30 33 32 34C29 36 26 38 25.3 39.4C24 36 20 33 16 32C19 31 21 30 22.5 28Z" fill="#e9d3b4"/><path d="M6.5 21.5C9 17.5 13 15.5 17 15.5C21 15.5 23 18 27 19C30 19.7 33 19.5 35 19C33 21.5 29 22.5 25.5 21.5C22 20.5 20 18.5 16.5 18.5C12.5 18.5 9 20 6.5 21.5Z" fill="#2a6a9e"/><path d="M2.5 38C3 32 8 28 14 26.5C17 26 20 26.5 22 27.5C17 28 12 30 9.5 34C7.5 37.5 8 42 11 46C7 44 3.5 41.5 2.5 38Z" fill="#1f4f80"/><path d="M11 46C8 41 9.5 35.5 14 32.5C18 30 24 30.5 29 31.5C24 32.5 19.5 34 17.5 37.5C16 40.5 17 44 20 47.5C23 50 28 51 33 50.8C26 52 16 51 11 46Z" fill="#2f74ad"/><path d="M14 41C13.5 37 16 34 20 33C17.5 35.5 17 39 18.5 42.5C20 46 23 48.5 27 49.5C21 50 15.5 46.5 14 41Z" fill="#153a66"/><path d="M8 33C11 28 17 27 21 23.5C22.5 22 23 20.5 23 19.5C24 22 23 25 20.5 27C17 29.5 11.5 30 8 33Z" fill="#2e8b6f"/><ellipse cx="13.5" cy="21" rx="2" ry="1.2" fill="#1f5f99"/><path d="M26.5 28.5L32.2 25L29.5 29.2Z" fill="#b8261e"/><ellipse cx="21" cy="42" rx="1.9" ry="1" fill="#e07a2a" transform="rotate(-40 21 42)"/></svg>
<svg style="left:2694px;top:29px" width="32" height="32" viewBox="0 0 32 32" fill="#e4e4e4"><path d="M16 22L6 12 7.4 10.6 16 19.2 24.6 10.6 26 12z"/></svg>
<svg style="left:2786px;top:26px" width="40" height="40" viewBox="0 0 32 32" fill="#e4e4e4"><path d="M16,2A14,14,0,1,0,30,16,14,14,0,0,0,16,2Zm0,26A12,12,0,1,1,28,16,12,12,0,0,1,16,28Z"/><circle cx="16" cy="23.5" r="1.5"/><path d="M17,8H15.5A4.49,4.49,0,0,0,11,12.5V13h2v-.5A2.5,2.5,0,0,1,15.5,10H17a2.5,2.5,0,0,1,0,5H15v4.5h2V17a4.5,4.5,0,0,0,0-9Z"/></svg>
<svg style="left:2882px;top:26px" width="40" height="40" viewBox="0 0 32 32" fill="#e4e4e4"><path d="M16,8a5,5,0,1,0,5,5A5,5,0,0,0,16,8Zm0,8a3,3,0,1,1,3-3A3.0034,3.0034,0,0,1,16,16Z"/><path d="M16,2A14,14,0,1,0,30,16,14.0158,14.0158,0,0,0,16,2ZM10,26.3765V25a3.0033,3.0033,0,0,1,3-3h6a3.0033,3.0033,0,0,1,3,3v1.3765a11.8989,11.8989,0,0,1-12,0Zm13.9925-1.4507A5.0016,5.0016,0,0,0,19,20H13a5.0016,5.0016,0,0,0-4.9925,4.9258,12,12,0,1,1,15.985,0Z"/></svg>
</div>
<div id="ov"></div>
<div id="modal">
<div class="a" style="left:766px;top:722px;width:1416px;height:4px;background:#525252;"></div>
<div class="a" style="left:1185px;top:722px;width:310px;height:4px;background:#4589ff;"></div>
<div class="a" style="left:798px;top:846px;width:1336px;height:132px;background:#393939;"></div>
<div class="a" style="left:798px;top:846px;width:915px;height:132px;background:#333333;box-sizing:border-box;border:2px solid #3c3c3c;border-right:none;"></div>
<div class="a" style="left:1713px;top:848px;width:3px;height:128px;background:#525252;"></div>
<div class="a" style="left:798px;top:1010px;width:1336px;height:132px;background:#393939;"></div>
<div class="a" style="left:798px;top:1010px;width:915px;height:132px;background:#333333;box-sizing:border-box;border:2px solid #3c3c3c;border-right:none;"></div>
<div class="a" style="left:1713px;top:1012px;width:3px;height:128px;background:#525252;"></div>
<div class="a" style="left:1923px;top:863px;width:104px;height:99px;background:transparent;box-sizing:border-box;border:5px solid #e83b22;"></div>
<div class="a" style="left:798px;top:1226px;width:400px;height:80px;background:#2f62f5;"></div>
<span class="t" style="top:659.00px;font-size:28px;color:#f4f4f4;left:862.50px;letter-spacing:0.734px;">Invite to collaborate</span>
<span class="t" style="top:659.00px;font-size:28px;color:#f4f4f4;left:1250.00px;letter-spacing:0.394px;">Share publicly</span>
<span class="t" style="top:791.00px;font-size:32px;color:#f4f4f4;left:798.00px;letter-spacing:0.039px;">Share one of these links for public viewers.</span>
<span class="t" style="top:1253.20px;font-size:28px;color:#ffffff;left:830.50px;letter-spacing:0.188px;">Create new snapshot</span>
<span class="t" style="top:873.00px;font-size:32px;color:#f4f4f4;left:920.30px;letter-spacing:0.784px;width:777px;overflow:hidden;">https://share.skydeck.ai/c/3be24e28-d249-430f-a6ea-5c1d9b7e2f40</span>
<span class="t" style="top:927.00px;font-size:26px;color:#8d8d8d;left:920.30px;letter-spacing:0.601px;">October 4 2024, at 11:53 AM, by Quan Cao</span>
<span class="t" style="top:1037.50px;font-size:32px;color:#f4f4f4;left:920.30px;letter-spacing:0.755px;width:777px;overflow:hidden;">https://share.skydeck.ai/c/b1440d13-76ae-44b8-b40</span>
<span class="t" style="top:1091.00px;font-size:26px;color:#8d8d8d;left:920.30px;letter-spacing:0.601px;">October 4 2024, at 11:53 AM, by Quan Cao</span>
<svg style="left:2114px;top:628px" width="40" height="40" viewBox="0 0 32 32" fill="#f4f4f4"><path d="M17.4141 16L24 9.4141 22.5859 8 16 14.5859 9.4143 8 8 9.4141 14.5859 16 8 22.5859 9.4143 24 16 17.4141 22.5859 24 24 22.5859 17.4141 16z"/></svg>
<svg style="left:1750px;top:889px" width="48" height="48" viewBox="0 0 32 32" fill="#6f6f6f"><path d="M26,28H6a2.0027,2.0027,0,0,1-2-2V6A2.0027,2.0027,0,0,1,6,4H16V6H6V26H26V16h2V26A2.0027,2.0027,0,0,1,26,28Z"/><path d="M20 2L20 4 26.586 4 18 12.586 19.414 14 28 5.414 28 12 30 12 30 2 20 2z"/></svg>
<svg style="left:1850px;top:889px" width="48" height="48" viewBox="0 0 32 32" fill="#6f6f6f"><path d="M11.9474,19a4.9476,4.9476,0,0,1-3.4991-8.4465l5.1053-5.1043a4.9482,4.9482,0,0,1,6.9981,6.9976l-.5523.5526-1.4158-1.4129.5577-.5579a2.95,2.95,0,0,0-.0039-4.1653,3.02,3.02,0,0,0-4.17,0l-5.1047,5.104a2.9474,2.9474,0,0,0,0,4.1692,3.02,3.02,0,0,0,4.17,0l1.4143,1.4145A4.9176,4.9176,0,0,1,11.9474,19Z"/><path d="M19.9474,17a4.9476,4.9476,0,0,1-3.4991-8.4465l.5526-.5526,1.4143,1.4146-.5526.5523a2.9476,2.9476,0,0,0,0,4.1689,3.02,3.02,0,0,0,4.17,0c.26-.26,4.7293-4.7293,5.1053-5.1045a2.951,2.951,0,0,0,0-4.1687,3.02,3.02,0,0,0-4.17,0L21.5536,3.449a4.9483,4.9483,0,0,1,6.9981,6.9978c-.3765.376-4.844,4.8428-5.1038,5.1035A4.9193,4.9193,0,0,1,19.9474,17Z"/><path d="M24,30H4a2.0021,2.0021,0,0,1-2-2V8A2.0021,2.0021,0,0,1,4,6H8V8H4V28H24V18h2V28A2.0021,2.0021,0,0,1,24,30Z"/></svg>
<svg style="left:1950px;top:889px" width="48" height="48" viewBox="0 0 32 32" fill="#78a9ff"><path d="M5.24,22.51l1.43-1.42A14.06,14.06,0,0,1,3.07,16C5.1,10.93,10.7,7,16,7a12.38,12.38,0,0,1,4,.72l1.55-1.56A14.72,14.72,0,0,0,16,5,16.69,16.69,0,0,0,1.06,15.66a1,1,0,0,0,0,.68A16,16,0,0,0,5.24,22.51Z"/><path d="M12 15.73a4 4 0 013.7-3.7l1.81-1.82a6 6 0 00-7.33 7.33zM30.94 15.66A16.4 16.4 0 0025.2 8.22L30 3.41 28.59 2 2 28.59 3.41 30l5.1-5.1A15.29 15.29 0 0016 27 16.69 16.69 0 0030.94 16.34 1 1 0 0030.94 15.66zM20 16a4 4 0 01-6 3.44L19.44 14A4 4 0 0120 16zm-4 9a13.05 13.05 0 01-6-1.58l2.54-2.54a6 6 0 008.35-8.35l2.87-2.87A14.54 14.54 0 0128.93 16C26.9 21.07 21.3 25 16 25z"/></svg>
<svg style="left:2050px;top:889px" width="48" height="48" viewBox="0 0 32 32" fill="#e83b22"><path d="M12 12H14V24H12zM18 12H20V24H18z"/><path d="M4 6V8H6V28a2 2 0 002 2H24a2 2 0 002-2V8h2V6zM8 28V8H24V28zM12 2H20V4H12z"/></svg>
<svg style="left:1750px;top:1053px" width="48" height="48" viewBox="0 0 32 32" fill="#78a9ff"><path d="M26,28H6a2.0027,2.0027,0,0,1-2-2V6A2.0027,2.0027,0,0,1,6,4H16V6H6V26H26V16h2V26A2.0027,2.0027,0,0,1,26,28Z"/><path d="M20 2L20 4 26.586 4 18 12.586 19.414 14 28 5.414 28 12 30 12 30 2 20 2z"/></svg>
<svg style="left:1850px;top:1053px" width="48" height="48" viewBox="0 0 32 32" fill="#78a9ff"><path d="M11.9474,19a4.9476,4.9476,0,0,1-3.4991-8.4465l5.1053-5.1043a4.9482,4.9482,0,0,1,6.9981,6.9976l-.5523.5526-1.4158-1.4129.5577-.5579a2.95,2.95,0,0,0-.0039-4.1653,3.02,3.02,0,0,0-4.17,0l-5.1047,5.104a2.9474,2.9474,0,0,0,0,4.1692,3.02,3.02,0,0,0,4.17,0l1.4143,1.4145A4.9176,4.9176,0,0,1,11.9474,19Z"/><path d="M19.9474,17a4.9476,4.9476,0,0,1-3.4991-8.4465l.5526-.5526,1.4143,1.4146-.5526.5523a2.9476,2.9476,0,0,0,0,4.1689,3.02,3.02,0,0,0,4.17,0c.26-.26,4.7293-4.7293,5.1053-5.1045a2.951,2.951,0,0,0,0-4.1687,3.02,3.02,0,0,0-4.17,0L21.5536,3.449a4.9483,4.9483,0,0,1,6.9981,6.9978c-.3765.376-4.844,4.8428-5.1038,5.1035A4.9193,4.9193,0,0,1,19.9474,17Z"/><path d="M24,30H4a2.0021,2.0021,0,0,1-2-2V8A2.0021,2.0021,0,0,1,4,6H8V8H4V28H24V18h2V28A2.0021,2.0021,0,0,1,24,30Z"/></svg>
<svg style="left:1950px;top:1053px" width="48" height="48" viewBox="0 0 32 32" fill="#78a9ff"><path d="M30.94,15.66A16.69,16.69,0,0,0,16,5,16.69,16.69,0,0,0,1.06,15.66a1,1,0,0,0,0,.68A16.69,16.69,0,0,0,16,27,16.69,16.69,0,0,0,30.94,16.34,1,1,0,0,0,30.94,15.66ZM16,25c-5.3,0-10.9-3.93-12.93-9C5.1,10.93,10.7,7,16,7s10.9,3.93,12.93,9C26.9,21.07,21.3,25,16,25Z"/><path d="M16,10a6,6,0,1,0,6,6A6,6,0,0,0,16,10Zm0,10a4,4,0,1,1,4-4A4,4,0,0,1,16,20Z"/></svg>
<svg style="left:2050px;top:1053px" width="48" height="48" viewBox="0 0 32 32" fill="#e83b22"><path d="M12 12H14V24H12zM18 12H20V24H18z"/><path d="M4 6V8H6V28a2 2 0 002 2H24a2 2 0 002-2V8h2V6zM8 28V8H24V28zM12 2H20V4H12z"/></svg>
<svg style="left:1134px;top:1250px" width="32" height="32" viewBox="0 0 32 32" fill="#ffffff"><path d="M16 22L6 12 7.4 10.6 16 19.2 24.6 10.6 26 12z"/></svg>
<svg style="left:840px;top:890px" width="48" height="45" viewBox="0 0 48 45"><rect x="0" y="18.1" width="48" height="4.7" fill="#ee0701"/><rect x="1.9" y="27.2" width="44.1" height="4.7" fill="#ee0701"/><g fill="none" stroke="#ee0701" stroke-width="4.6"><path d="M6.2 18.5C7.5 9 11 2.8 17.5 2.8H30.5C37 2.8 40 9 41.4 18.5"/><path d="M6.2 31.5V34.5A6.95 6.95 0 0 0 20.1 34.5V31.5M28.2 31.5V34.5A6.75 6.75 0 0 0 41.7 34.5V31.5"/></g></svg>
<svg style="left:840px;top:1052px" width="46" height="46" viewBox="0 0 46 46"><g fill="none" stroke="#ffffff" stroke-width="3"><path d="M11.4 3.9A19.5 19.5 0 0 1 40.4 21"/><path d="M3.5 11.9A19.5 19.5 0 0 0 28.2 39.1"/><path d="M1.4 21H40.4"/><path d="M20.6 1.6Q7 21 19.6 40"/><path d="M21.6 1.8Q27.6 9 28.4 21"/><circle cx="37.7" cy="37.4" r="4.6"/></g><circle cx="7.4" cy="7.4" r="3.1" fill="#fff"/><circle cx="28.4" cy="28.5" r="3.1" fill="#fff"/></svg>
</div>
<svg style="left:0;top:1910px" width="12" height="24" viewBox="0 0 12 24"><path d="M0 3C0.5 10 2 15 4 17.5C6 20 8 22.5 9.6 24L0 24Z" fill="#1c222b"/><path d="M0 3C0.5 10 2 15 4 17.5C6 20 8 22.5 9.6 24" fill="none" stroke="#5c5c5c" stroke-width="1.2"/></svg>
<svg style="left:2936px;top:1914px" width="12" height="20" viewBox="0 0 12 20"><path d="M12 4C11.5 10 10 14 8 16.5C6.5 18 5 19.2 3.3 20L12 20Z" fill="#b4b4b4"/><path d="M12 4C11.5 10 10 14 8 16.5C6.5 18 5 19.2 3.3 20" fill="none" stroke="#3a3a3a" stroke-width="1.5"/></svg>
</body></html>
